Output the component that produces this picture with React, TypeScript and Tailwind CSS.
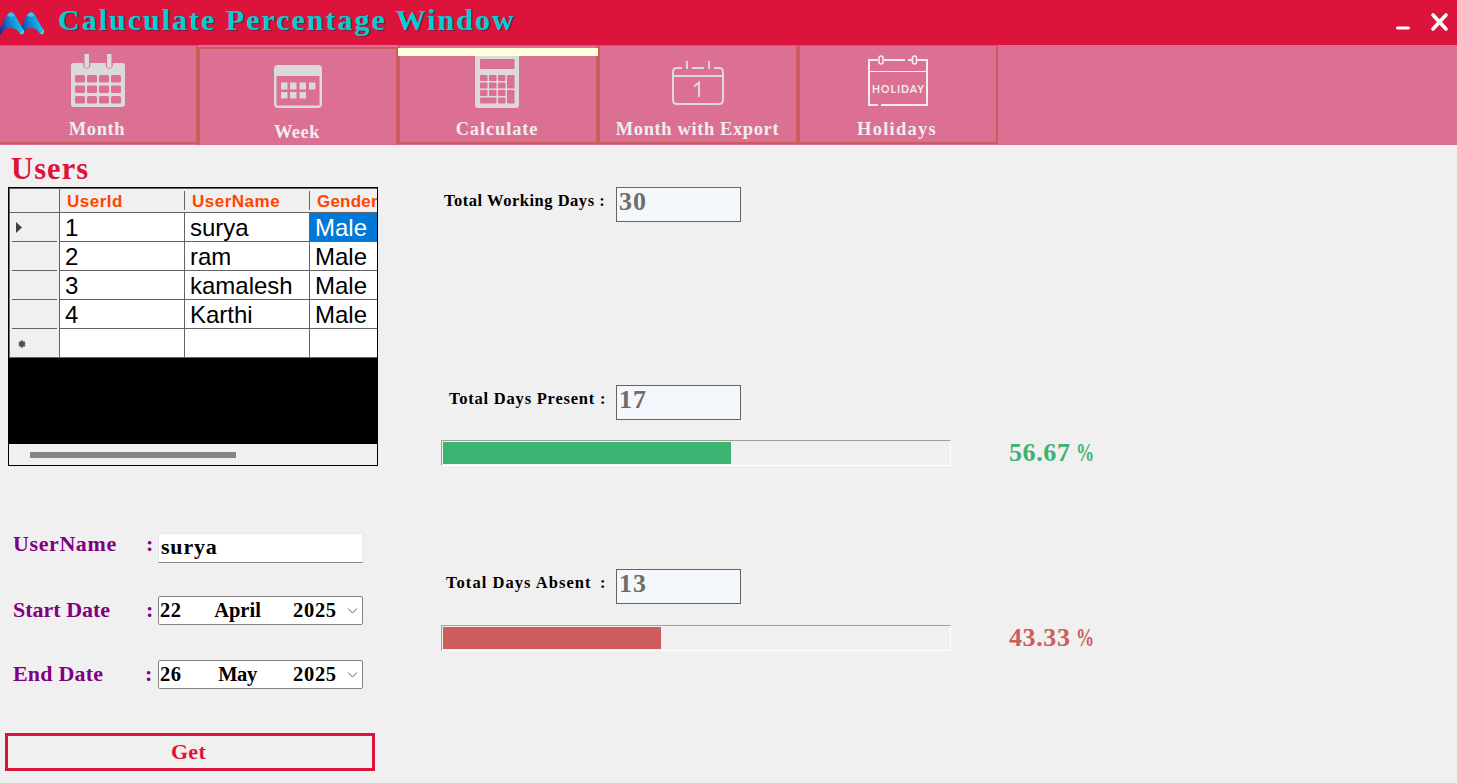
import React from "react";

const users = [
  { id: "1", name: "surya", gender: "Male" },
  { id: "2", name: "ram", gender: "Male" },
  { id: "3", name: "kamalesh", gender: "Male" },
  { id: "4", name: "Karthi", gender: "Male" },
];

function Logo() {
  return (
    <svg width="44" height="24" viewBox="0 0 44 24" className="mt-[11px] block">
      <defs>
        <linearGradient id="peak" x1="0" y1="0.7" x2="1" y2="0.5">
          <stop offset="0" stopColor="#1c2f9c" />
          <stop offset="0.4" stopColor="#0f7fd0" />
          <stop offset="1" stopColor="#12d4ee" />
        </linearGradient>
      </defs>
      <path d="M20 19 C23 14 25 7 27.500 3.500 Q31 0 34.500 3.500 C37 7 40 14 43.700 19 C44.500 22 41.500 25 39.500 22 C38 19.500 35 17 31 17 C27 17 25 19 22.500 22 Z" fill="url(#peak)" />
      <path d="M0 17 C3 13 5 7 7.500 3.500 Q11 0 14.500 3.500 C17 7 20 14 23.700 19 C24.500 22 21.500 25 19.500 22 C18 19.500 15 17 10.500 17 C6 17 4 19 2 22 Q1 24 0 24 Z" fill="url(#peak)" />
      <path d="M7 4.500 Q11 -2.500 15 4.500 Q11 7 7 4.500 Z M27 4.500 Q31 -2.500 35 4.500 Q31 7 27 4.500 Z" fill="#35c5f5" />
      <path d="M20.500 22 Q23.500 24 23.300 19 M40.500 22 Q43.500 24 43.300 19" fill="none" stroke="#28eef0" strokeWidth="1.500" />
    </svg>
  );
}

function MonthIcon() {
  return (
    <svg width="54" height="53" viewBox="0 0 54 53" className="block">
      <rect x="0" y="9" width="54" height="44" rx="3" fill="#dcdad8" />
      <path d="M12.300 8.500 V12.500 Q15.700 17 19.200 12.500 V8.500 Z M34.800 8.500 V12.500 Q38.200 17 41.700 12.500 V8.500 Z" fill="#db7093" />
      <path d="M13.500 0 H18 V13 Q15.700 15 13.500 13 Z M36 0 H40.500 V13 Q38.200 15 36 13 Z" fill="#dcdad8" />
      <g fill="#db7093">
        {[21, 31.5, 42].map((y) =>
          [4, 16, 28, 40].map((x) => <rect key={`${x}-${y}`} x={x} y={y} width="10" height="7.500" rx="1.500" />)
        )}
      </g>
    </svg>
  );
}

function WeekIcon() {
  return (
    <svg width="48" height="43" viewBox="0 0 48 43" className="block">
      <path fillRule="evenodd" d="M4 0 H44 Q48 0 48 4 V39 Q48 43 44 43 H4 Q0 43 0 39 V4 Q0 0 4 0 Z M2.500 11 V40.500 H45.500 V11 Z" fill="#dcdad8" />
      <g fill="#dcdad8">
        {[7, 16, 25.5, 35].map((x) => <rect key={x} x={x} y="17.500" width="6.500" height="7" />)}
        {[7, 16, 25.5].map((x) => <rect key={x} x={x} y="27" width="6.500" height="6.500" />)}
      </g>
    </svg>
  );
}

function CalculatorIcon() {
  return (
    <svg width="44" height="52" viewBox="0 0 44 52" className="block -ml-[2px]">
      <path d="M0 0 H44 V49 Q44 52 41 52 H3 Q0 52 0 49 Z" fill="#dcdad8" />
      <g fill="#db7093">
        <rect x="5" y="3" width="34.500" height="10" rx="1" />
        {[19, 26.5, 34].map((y) =>
          [5, 14, 23].map((x) => <rect key={`${x}-${y}`} x={x} y={y} width="7.500" height="6" rx="1" />)
        )}
        <rect x="32" y="19" width="7.500" height="13.500" rx="1" />
        <rect x="32" y="34" width="7.500" height="13.500" rx="1" />
        <rect x="5" y="41.500" width="16.500" height="6" rx="1" />
        <rect x="23" y="41.500" width="7.500" height="6" rx="1" />
      </g>
    </svg>
  );
}

function ExportIcon() {
  return (
    <svg width="52" height="44" viewBox="0 0 52 44" className="block" fill="none" stroke="#dcdad8" strokeWidth="2">
      <path d="M10 7 H5 Q1 7 1 11 V39 Q1 43 5 43 H47 Q51 43 51 39 V11 Q51 7 47 7 H42 M20 7 H32 M15 0 V8 M37 0 V8 M1 15 H51" />
      <path d="M22 25.500 L27 21.500 V36" />
    </svg>
  );
}

function HolidayIcon() {
  return (
    <svg width="60" height="52" viewBox="0 0 60 52" className="block" fill="none" stroke="#f2ecee" strokeWidth="2">
      <path d="M10 50 H1 V5 H10 M16 5 H37 M40 5 H44 M49 5 H59 V50 H13" />
      <path d="M1 16.500 H59" strokeWidth="1" />
      <rect x="11" y="1" width="4" height="8" rx="2" strokeWidth="1.600" />
      <rect x="44.500" y="1" width="4" height="8" rx="2" strokeWidth="1.600" />
      <text x="4" y="38" transform="translate(0 -4.500) scale(1 1.120)" fill="#f2ecee" stroke="none" className="font-['Lato',sans-serif] text-[10.5px] font-bold" textLength="52" lengthAdjust="spacing">HOLIDAY</text>
    </svg>
  );
}

function TabLabel({ children, className }: { children: React.ReactNode; className: string }) {
  return <span className={`block h-5 whitespace-nowrap text-[18.5px] leading-5 text-[#f2ecee] ${className}`}>{children}</span>;
}

function DateField({ day, month, year, monthClass }: { day: string; month: string; year: string; monthClass: string }) {
  return (
    <div className="flex h-[29px] w-[205px] items-center rounded-[2px] border border-[#858585] bg-white text-[20.5px] leading-[27px] text-black">
      <span className="w-[32px] pl-px tracking-[0.6px]">{day}</span>
      <span className={`w-[102px] pr-[9px] text-center ${monthClass}`}>{month}</span>
      <span className="w-[54px] tracking-[0.7px]">{year}</span>
      <svg width="11" height="6" viewBox="0 0 11 6" fill="none" stroke="#606060" strokeWidth="1">
        <path d="M1 0.500 L5.500 5 L10 0.500" />
      </svg>
    </div>
  );
}

function StatBox({ value }: { value: string }) {
  return (
    <div className="h-[35px] w-[125px] border border-[#646464] bg-[#f4f7fc] pl-[2px] text-[26px] leading-[27px] tracking-[1px] text-[#6d6d6d]">{value}</div>
  );
}

function ProgressBar({ fillClass }: { fillClass: string }) {
  return (
    <div className="h-[26px] w-[510px] border border-b-white border-r-white border-l-[#a0a0a0] border-t-[#a0a0a0] p-px">
      <div className={`h-[22px] ${fillClass}`} />
    </div>
  );
}

function Percent({ value, className }: { value: string; className: string }) {
  return (
    <div className={`flex text-[26px] leading-[26px] ${className}`}>
      <span className="w-[67px] tracking-[0.6px]">{value}</span>
      <span className="origin-left scale-x-[.7]">%</span>
    </div>
  );
}

function RowHeader({ children, last = false }: { children?: React.ReactNode; last?: boolean }) {
  return (
    <div className={`flex w-[49px] shrink-0 bg-[#f0f0f0] ${last ? "" : "px-[2px]"}`}>
      <div className="flex w-full items-center border-b border-[#646464]">{children}</div>
    </div>
  );
}

const cell = "h-[29px] w-[125px] shrink-0 border-b border-l border-[#646464] pl-[5px] pt-px leading-[28px]";

export default function App() {
  return (
    <div className="flex h-[783px] w-[1457px] flex-col overflow-hidden bg-[#f0f0f0] font-['Liberation_Serif',serif] font-bold">
      <header className="flex h-[45px] shrink-0 bg-[#dc143c]">
        <Logo />
        <h1 className="ml-[14px] whitespace-nowrap text-[30px] leading-[40px] tracking-[2px] text-[#00ced1] [text-shadow:1px_1px_0_#7a2040]">
          Caluculate Percentage Window
        </h1>
        <div className="ml-auto flex">
          <svg width="62" height="45" viewBox="0 0 62 45" fill="none" stroke="#ffffff" strokeLinecap="round">
            <path d="M2.500 28 H13.500" strokeWidth="3" />
            <path d="M38 15 L51 29 M51 15 L38 29" strokeWidth="3.600" />
          </svg>
        </div>
      </header>

      <nav className="flex h-[100px] shrink-0 bg-[#db7093]">
        <div className="flex h-[99px] w-[198px] flex-col items-center border-b-2 border-r-2 border-t border-[#cd5c5c] pt-[8px]">
          <MonthIcon />
          <TabLabel className="mt-[12px] -ml-[2px] tracking-[0.6px]">Month</TabLabel>
        </div>
        <div className="mt-[2px] flex h-[98px] w-[200px] flex-col items-center border-x-2 border-t-2 border-[#cd5c5c] pt-[16px]">
          <WeekIcon />
          <TabLabel className="mt-[14px] -ml-[2px] tracking-[0.5px]">Week</TabLabel>
        </div>
        <div className="flex h-[99px] w-[200px] flex-col items-center border-x-2 border-b-2 border-t border-[#cd5c5c] pt-[2px]">
          <div className="-mx-[2px] h-2 w-[200px] shrink-0 self-start bg-[#ffffe0]" />
          <CalculatorIcon />
          <TabLabel className="mt-[11px] -ml-[2px] tracking-[0.85px]">Calculate</TabLabel>
        </div>
        <div className="flex h-[99px] w-[200px] flex-col items-center border-x-2 border-b-2 border-t border-[#cd5c5c] pt-[15px]">
          <ExportIcon />
          <TabLabel className="mt-[14px] -ml-px tracking-[0.6px]">Month with Export</TabLabel>
        </div>
        <div className="flex h-[99px] w-[200px] flex-col items-center border-x-2 border-b-2 border-t border-[#cd5c5c] pt-[9px]">
          <HolidayIcon />
          <TabLabel className="mt-[12px] -ml-[2px] tracking-[1.25px]">Holidays</TabLabel>
        </div>
      </nav>

      <main className="flex min-h-0 flex-1">
        <section className="flex w-[441px] shrink-0 flex-col">
          <h2 className="h-[42px] pl-[11px] pt-[6px] text-[30.5px] leading-[37px] tracking-[1.1px] text-[#dc143c]">Users</h2>

          <div className="ml-2 flex h-[279px] w-[370px] flex-col overflow-hidden border border-black bg-black font-['Liberation_Sans',sans-serif] font-normal">
            <div className="border-l border-t border-[#646464] bg-white">
              <div className="flex h-6 border-b border-[#646464] bg-[#f0f0f0] text-[17px] font-bold leading-[25px] tracking-[0.5px] text-[#ff4500]">
                <div className="w-[49px] shrink-0" />
                <div className="w-[125px] shrink-0 border-l border-[#646464] pl-[7px]">UserId</div>
                <div className="my-[2px] w-[125px] shrink-0 border-l border-[#646464] pl-[7px] leading-[21px]">UserName</div>
                <div className="my-[2px] w-[125px] shrink-0 border-l border-[#646464] pl-[7px] leading-[21px] tracking-[0.2px]">Gender</div>
              </div>
              {users.map((user, index) => (
                <div key={user.id} className="flex text-[24px] text-black">
                  <RowHeader>
                    {index === 0 && (
                      <svg width="9" height="13" viewBox="0 0 9 13" className="ml-[3px]">
                        <path d="M1 1 L7 6.500 L1 12 Z" fill="#404040" />
                      </svg>
                    )}
                  </RowHeader>
                  <div className={cell}>{user.id}</div>
                  <div className={cell}>{user.name}</div>
                  <div className={index === 0 ? `${cell} bg-[#0078d7] text-white` : cell}>{user.gender}</div>
                </div>
              ))}
              <div className="flex">
                <RowHeader last>
                  <svg width="8" height="8" viewBox="0 0 8 8" className="ml-[8px] mt-[2px]">
                    <path d="M4 0.500 V7.500 M1 2.200 L7 5.800 M7 2.200 L1 5.800" stroke="#505050" strokeWidth="2.400" />
                  </svg>
                </RowHeader>
                <div className={cell} />
                <div className={cell} />
                <div className={cell} />
              </div>
            </div>
            <div className="mt-auto flex h-[21px] items-center bg-[#f0f0f0] pl-[21px]">
              <div className="h-[6px] w-[206px] bg-[#858585]" />
            </div>
          </div>

          <div className="mt-[67px] flex h-[30px] pl-[13px] text-[22px] text-[#800080]">
            <span className="w-[133px] leading-[21px] tracking-[0.6px]">UserName</span>
            <span className="w-[12px] leading-[21px]">:</span>
            <div className="h-[30px] w-[205px] border border-b-[#858585] border-l-[#e8e8e8] border-r-[#e8e8e8] border-t-[#e8e8e8] bg-white pl-[2px] leading-[26px] tracking-[0.8px] text-black">surya</div>
          </div>
          <div className="mt-[33px] flex h-[29px] pl-[13px] text-[22px] leading-[27px] text-[#800080]">
            <span className="w-[133px]">Start Date</span>
            <span className="w-[12px]">:</span>
            <DateField day="22" month="April" year="2025" monthClass="" />
          </div>
          <div className="mt-[35px] flex h-[29px] pl-[13px] text-[22px] leading-[27px] text-[#800080]">
            <span className="w-[132px] tracking-[0.2px]">End Date</span>
            <span className="w-[13px]">:</span>
            <DateField day="26" month="May" year="2025" monthClass="tracking-[-0.4px]" />
          </div>

          <button className="ml-[5px] mt-[44px] h-[38px] w-[370px] border-[3px] border-[#dc143c] pr-[3px] text-[22px] leading-[30px] tracking-[0.3px] text-[#dc143c]">Get</button>
        </section>

        <section className="flex flex-1 flex-col pt-[42px] text-[16.5px] leading-[27px] text-black">
          <div className="flex h-[35px]">
            <div className="w-[175px] whitespace-nowrap pl-[3px] tracking-[0.52px]">Total Working Days :</div>
            <StatBox value="30" />
          </div>
          <div className="mt-[163px] flex h-[35px]">
            <div className="w-[175px] whitespace-nowrap pl-[8px] tracking-[0.78px]">Total Days Present :</div>
            <StatBox value="17" />
          </div>
          <div className="mt-[20px] flex items-center">
            <ProgressBar fillClass="w-[288px] bg-[#3cb371]" />
            <Percent value="56.67" className="ml-[58px] text-[#3cb371]" />
          </div>
          <div className="mt-[103px] flex h-[35px]">
            <div className="flex w-[175px] whitespace-nowrap pl-[5px] tracking-[1.05px]">
              <span className="w-[154px]">Total Days Absent</span>
              <span>:</span>
            </div>
            <StatBox value="13" />
          </div>
          <div className="mt-[21px] flex items-center">
            <ProgressBar fillClass="w-[218px] bg-[#cd5c5c]" />
            <Percent value="43.33" className="ml-[58px] text-[#cd5c5c]" />
          </div>
        </section>
      </main>
    </div>
  );
}
